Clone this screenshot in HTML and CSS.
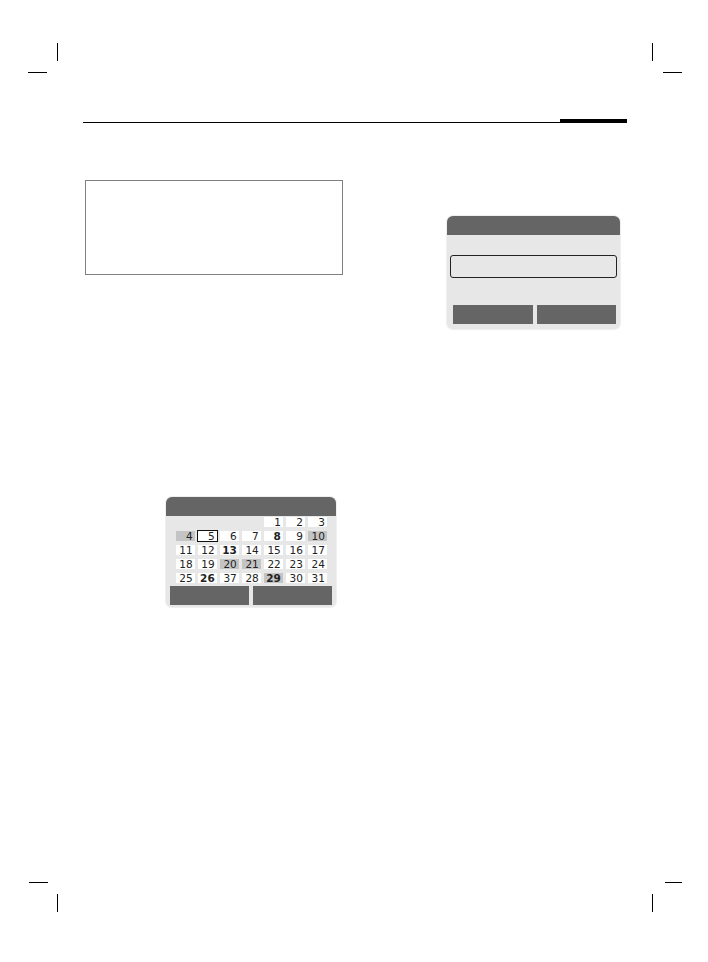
FILE: index.html
```html
<!DOCTYPE html>
<html>
<head>
<meta charset="utf-8">
<link rel="stylesheet" href="styles.css">
</head>
<body>
<div class="page">
  <div class="marks marks-top">
    <div class="corner corner-tl"><div class="mv"></div><div class="mh"></div></div>
    <div class="corner corner-tr"><div class="mv"></div><div class="mh"></div></div>
  </div>
  <div class="header-rule"><div class="rule-thin"></div><div class="rule-thick"></div></div>
  <div class="content">
    <div class="col-left">
      <div class="note-box"></div>
      <div class="cal">
        <div class="cal-head"></div>
        <div class="cal-grid">
          <span class="c empty"></span><span class="c empty"></span><span class="c empty"></span><span class="c empty"></span>
          <span class="c">1</span><span class="c">2</span><span class="c">3</span>
          <span class="c gray">4</span><span class="c sel">5</span><span class="c">6</span><span class="c">7</span><span class="c b">8</span><span class="c">9</span><span class="c gray">10</span>
          <span class="c">11</span><span class="c">12</span><span class="c b">13</span><span class="c">14</span><span class="c">15</span><span class="c">16</span><span class="c">17</span>
          <span class="c">18</span><span class="c">19</span><span class="c gray">20</span><span class="c gray">21</span><span class="c">22</span><span class="c">23</span><span class="c">24</span>
          <span class="c">25</span><span class="c b">26</span><span class="c">37</span><span class="c">28</span><span class="c b gray">29</span><span class="c">30</span><span class="c">31</span>
        </div>
        <div class="softkeys cal-keys"><div class="key"></div><div class="key"></div></div>
      </div>
    </div>
    <div class="col-right">
      <div class="dialog">
        <div class="dlg-head"></div>
        <div class="dlg-input"></div>
        <div class="softkeys dlg-keys"><div class="key"></div><div class="key"></div></div>
      </div>
    </div>
  </div>
  <div class="marks marks-bottom">
    <div class="corner corner-bl"><div class="mh"></div><div class="mv"></div></div>
    <div class="corner corner-br"><div class="mh"></div><div class="mv"></div></div>
  </div>
</div>
</body>
</html>
```
FILE: styles.css
```css
html, body {
  margin: 0;
  padding: 0;
  background: #ffffff;
}
.page {
  width: 708px;
  height: 962px;
  overflow: hidden;
  font-family: "DejaVu Sans", "Liberation Sans", sans-serif;
}
.marks {
  display: flex;
  justify-content: space-between;
  padding: 0 26px 0 28px;
}
.marks-top { padding-top: 43px; }
.corner { width: 30px; }
.mv { width: 1px; height: 18px; background: #000; }
.mh { width: 19px; height: 1px; background: #000; }
.corner-tl .mv { margin-left: 29px; }
.corner-tl .mh { margin-top: 11px; }
.corner-tr .mh { margin-top: 11px; margin-left: 11px; }
.corner-bl .mv { margin-left: 29px; margin-top: 11px; }
.corner-bl .mh { margin-left: 1px; }
.corner-br .mh { margin-left: 13px; width: 17px; }
.corner-br .mv { margin-top: 11px; }

.header-rule {
  display: flex;
  align-items: flex-end;
  margin: 46px 81px 0 83px;
}
.rule-thin { flex: 1; height: 1px; background: #000; }
.rule-thick { width: 67px; height: 4px; background: #000; }

.content {
  display: flex;
  height: 759px;
  padding-left: 85px;
}
.col-left { width: 258px; }
.note-box {
  box-sizing: border-box;
  margin-top: 57px;
  height: 95px;
  border: 1px solid #808080;
}
.cal {
  margin-top: 222px;
  margin-left: 81px;
  width: 170px;
  background: #e7e7e7;
  border-radius: 6px;
  box-shadow: 0 0 1px 1px #eeeeee;
  padding-bottom: 2px;
}
.cal-head {
  height: 19px;
  background: #656565;
  border-radius: 6px 6px 0 0;
}
.cal-grid {
  display: grid;
  grid-template-columns: repeat(7, 18.7px);
  column-gap: 3.35px;
  row-gap: 3.9px;
  padding: 0 9px 0 10px;
  margin-top: 1px;
}
.c {
  box-sizing: border-box;
  height: 10px;
  line-height: 10px;
  font-size: 10.5px;
  text-align: right;
  padding-right: 2px;
  background: #ffffff;
  color: #222222;
  white-space: nowrap;
}
.c.empty { background: transparent; }
.c.gray { background: #c4c4c4; }
.c.b { font-weight: bold; }
.c.sel {
  outline: 1.5px solid #111;
  outline-offset: 0;
}
.softkeys {
  display: flex;
  gap: 4px;
}
.key { flex: 1; height: 19px; background: #656565; }
.cal-keys { margin-top: 3.5px; padding: 0 4px; }

.col-right { margin-left: 104px; }
.dialog {
  margin-top: 93px;
  width: 173px;
  background: #e7e7e7;
  border-radius: 6px;
  box-shadow: 0 0 1px 1px #eeeeee;
  padding-bottom: 5px;
}
.dlg-head {
  height: 19px;
  background: #656565;
  border-radius: 6px 6px 0 0;
}
.dlg-input {
  box-sizing: border-box;
  margin: 20px 3px 0 3px;
  height: 23px;
  border: 1px solid #222;
  border-radius: 3px;
  background: #e7e7e7;
}
.dlg-keys { margin-top: 27px; padding: 0 4px 0 6px; }

.marks-bottom { padding-top: 0; }
```
